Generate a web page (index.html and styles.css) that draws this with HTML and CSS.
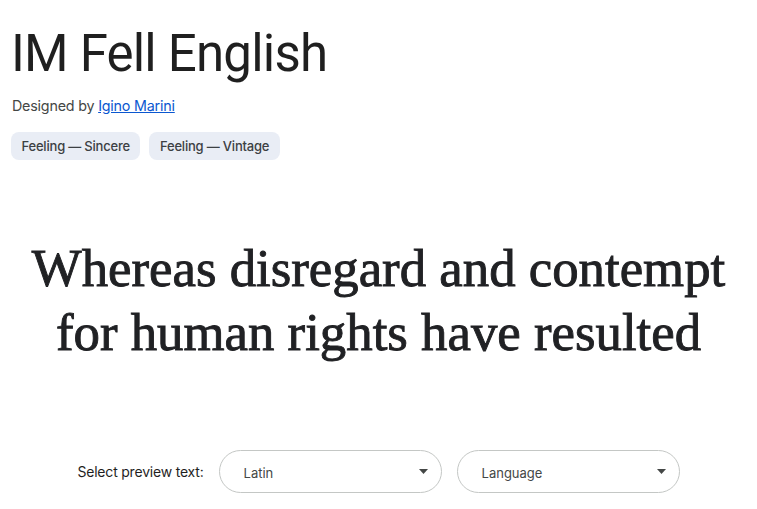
FILE: index.html
```html
<!DOCTYPE html>
<html lang="en">
<head>
    <meta charset="UTF-8">
    <meta name="viewport" content="width=device-width, initial-scale=1.0">
    <title>IM Fell English</title>
    <link rel="stylesheet" href="styles.css">
</head>
<body>
    <header class="font-header">
        <h1>IM Fell English</h1>
        <p class="designer">Designed by <a href="#">Igino Marini</a></p>
        <div class="tags">
            <span class="tag">Feeling — Sincere</span>
            <span class="tag">Feeling — Vintage</span>
        </div>
    </header>

    <section class="preview">
        <p>Whereas disregard and contempt<br>for human rights have resulted</p>
    </section>

    <div class="controls">
        <label>Select preview text:</label>
        <div class="select">
            <span>Latin</span>
            <svg width="9" height="5" viewBox="0 0 9 5"><path d="M0 0h9L4.5 5z" fill="#444746"/></svg>
        </div>
        <div class="select">
            <span>Language</span>
            <svg width="9" height="5" viewBox="0 0 9 5"><path d="M0 0h9L4.5 5z" fill="#444746"/></svg>
        </div>
    </div>
</body>
</html>
```

FILE: styles.css
```css
/* Basic reset */
* {
    margin: 0;
    padding: 0;
    box-sizing: border-box;
}

body {
    font-family: Inter, Roboto, sans-serif;
    color: #1f1f1f;
    background: #ffffff;
    width: 757px;
    height: 509px;
    overflow: hidden;
}

.font-header {
    padding: 20px 11px 0;
}

h1 {
    font-family: Roboto, 'Open Sans', sans-serif;
    font-weight: 400;
    font-size: 51px;
    line-height: 68px;
    letter-spacing: -0.8px;
    color: #1f1f1f;
}

.designer {
    font-size: 14.3px;
    color: #444746;
    margin-top: 9px;
    padding-left: 1px;
    letter-spacing: -0.2px;
}

.designer a {
    color: #0b57d0;
}

.tags {
    display: flex;
    gap: 9px;
    margin-top: 18px;
}

.tag {
    background: #e9edf5;
    color: #3c4043;
    font-size: 13px;
    font-weight: 500;
    height: 28px;
    line-height: 28px;
    padding: 0 10.5px;
    border-radius: 8px;
    letter-spacing: -0.2px;
}

.preview {
    text-align: center;
    margin-top: 76px;
}

.preview p {
    font-family: 'Liberation Serif', serif;
    font-size: 52.8px;
    line-height: 64px;
    color: #202124;
    -webkit-text-stroke: 0.9px #202124;
}

.controls {
    display: flex;
    justify-content: center;
    align-items: center;
    gap: 15px;
    margin-top: 86px;
}

.controls label {
    font-size: 14px;
    color: #1f1f1f;
    letter-spacing: -0.2px;
}

.select {
    width: 223px;
    height: 43px;
    border: 1px solid #c4c7c5;
    border-radius: 22px;
    display: flex;
    align-items: center;
    justify-content: space-between;
    padding: 0 13px 0 24px;
    font-size: 13px;
    color: #444746;
}

.select span {
    padding-top: 2px;
}
```
